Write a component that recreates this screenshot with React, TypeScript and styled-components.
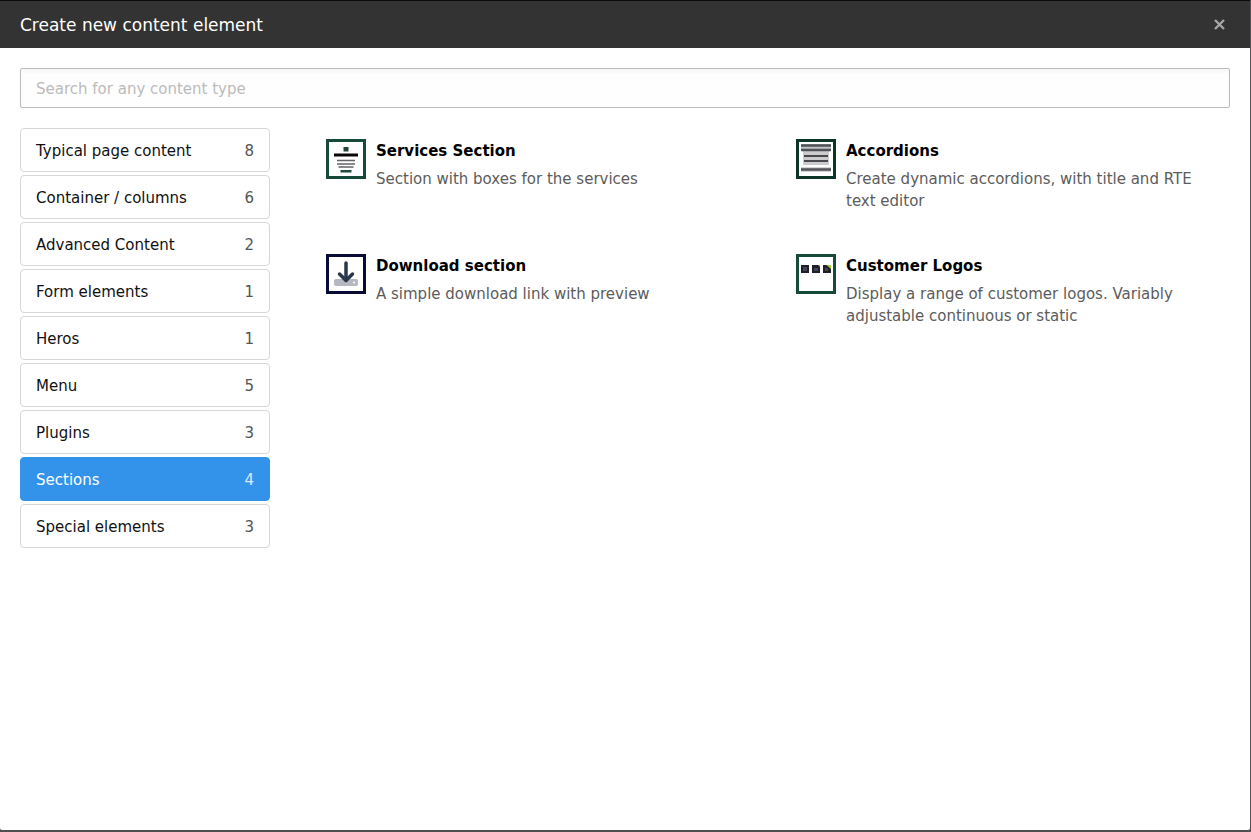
import React from "react";
import styled, { createGlobalStyle } from "styled-components";

const GlobalStyle = createGlobalStyle`
  *, *::before, *::after { box-sizing: border-box; }
  html, body { margin: 0; }
  body {
    background: #505053;
    color: #000;
    font-family: Verdana, "DejaVu Sans", sans-serif;
    font-size: 15px;
    line-height: 22px;
  }
`;

const Modal = styled.div`
  display: flex;
  flex-direction: column;
  min-height: calc(100vh - 2px);
  margin: 0 1px 2px 0;
  background: #fff;
  border-radius: 0 0 2px 2px;
`;

const ModalHeader = styled.header`
  display: flex;
  align-items: center;
  justify-content: space-between;
  height: 48px;
  padding: 0 20px;
  border-top: 1px solid #0c0c0c;
  background: #333;
  color: #fff;
`;

const ModalTitle = styled.h1`
  margin: 0;
  font-size: 17px;
  font-weight: 400;
`;

const CloseButton = styled.button`
  display: flex;
  padding: 5px;
  border: 0;
  background: none;
  color: #a6a6a6;
  cursor: pointer;
`;

const ModalBody = styled.main`
  display: flex;
  flex-direction: column;
  gap: 20px;
  padding: 20px;
`;

const SearchInput = styled.input`
  width: 100%;
  height: 40px;
  padding: 2px 15px 0;
  border: 1px solid #bbb;
  border-radius: 2px;
  background: #fefefe;
  box-shadow: inset 0 3px 3px #f7f7f7;
  font: inherit;
  color: #000;

  &::placeholder {
    color: #bbb;
    opacity: 1;
  }
`;

const Wizard = styled.div`
  display: flex;
  align-items: flex-start;
  gap: 20px;
`;

const CategoryNav = styled.nav`
  display: flex;
  flex: 0 0 250px;
  flex-direction: column;
  gap: 3px;
`;

const CategoryButton = styled.button<{ $active: boolean }>`
  display: flex;
  align-items: center;
  justify-content: space-between;
  height: 44px;
  padding: 2px 15px 0;
  border: 1px solid ${(p) => (p.$active ? "#3393eb" : "#d7d7d7")};
  border-radius: 4px;
  background: ${(p) => (p.$active ? "#3393eb" : "#fff")};
  color: ${(p) => (p.$active ? "#fff" : "#111")};
  font: inherit;
  text-align: left;
  cursor: pointer;
`;

const Count = styled.span<{ $active: boolean }>`
  color: ${(p) => (p.$active ? "#d6e9fb" : "#555")};
`;

const ItemGrid = styled.div`
  display: grid;
  flex: 1;
  grid-template-columns: repeat(2, minmax(0, 1fr));
`;

const Item = styled.button`
  display: flex;
  align-items: flex-start;
  gap: 10px;
  min-height: 115px;
  padding: 11px 16px 20px 36px;
  border: 0;
  background: none;
  color: inherit;
  font: inherit;
  text-align: left;
  cursor: pointer;
`;

const ItemIcon = styled.svg`
  flex: none;
  width: 40px;
  height: 40px;
`;

const ItemText = styled.span`
  display: flex;
  flex-direction: column;
  gap: 5px;
`;

const ItemTitle = styled.strong`
  font-weight: 700;
  line-height: 24px;
`;

const ItemDescription = styled.span`
  color: #5c5c5c;
`;

const ServicesIcon = () => (
  <ItemIcon viewBox="0 0 40 40" aria-hidden="true">
    <rect x="1.5" y="1.5" width="37" height="37" fill="#fff" stroke="#174a38" strokeWidth="3" />
    <rect x="17.5" y="8" width="5" height="4.5" fill="#214539" />
    <rect x="8" y="14.5" width="24" height="3" fill="#080808" />
    <path d="M11 21.500h18M11 25h18M12.500 28h15" stroke="#62656a" strokeWidth="1.700" />
    <rect x="14.500" y="31" width="11" height="2.500" fill="#214b3c" />
  </ItemIcon>
);

const AccordionIcon = () => (
  <ItemIcon viewBox="0 0 40 40" aria-hidden="true">
    <rect x="1.500" y="1.500" width="37" height="37" fill="#fff" stroke="#0d3527" strokeWidth="3" />
    <rect x="5" y="5" width="30" height="7" fill="#c3c3c5" />
    <rect x="7" y="12" width="26" height="14" fill="#cbcbce" />
    <rect x="5" y="28" width="30" height="5" fill="#d3d3d6" />
    <path d="M5 6.500h30M5 11h30M5 30.500h30" stroke="#505257" strokeWidth="2.500" />
    <path d="M8 17h24M8 22h24" stroke="#48494e" strokeWidth="1.800" />
  </ItemIcon>
);

const DownloadIcon = () => (
  <ItemIcon viewBox="0 0 40 40" aria-hidden="true">
    <rect x="1.500" y="1.500" width="37" height="37" fill="#fff" stroke="#080b36" strokeWidth="3" />
    <rect x="8" y="25" width="24" height="7" rx="2" fill="#b5b8c0" />
    <circle cx="28" cy="28.500" r="1" fill="#fff" />
    <path d="M20 9v17" fill="none" stroke="#28364b" strokeWidth="3.500" strokeLinecap="round" />
    <path d="m13.500 20 6.500 6.500 6.500-6.500" fill="none" stroke="#28364b" strokeWidth="3.500" strokeLinecap="round" strokeLinejoin="round" />
  </ItemIcon>
);

const LogosIcon = () => (
  <ItemIcon viewBox="0 0 40 40" aria-hidden="true">
    <rect x="1.500" y="1.500" width="37" height="37" fill="#fff" stroke="#174a38" strokeWidth="3" />
    <rect x="5" y="11" width="8" height="8" fill="#20202c" />
    <rect x="16" y="11" width="8" height="8" fill="#20202c" />
    <rect x="27" y="11" width="8" height="8" fill="#20202c" />
    <path d="M7 13h4v4H7zM18 14h4v3h-4zM29 14h3v3h-3z" fill="#424653" />
    <path d="M22 11h2v2z" fill="#9ab05c" />
    <path d="M30.500 11H35v4z" fill="#a5d32b" />
  </ItemIcon>
);

const categories = [
  { name: "Typical page content", count: 8 },
  { name: "Container / columns", count: 6 },
  { name: "Advanced Content", count: 2 },
  { name: "Form elements", count: 1 },
  { name: "Heros", count: 1 },
  { name: "Menu", count: 5 },
  { name: "Plugins", count: 3 },
  { name: "Sections", count: 4 },
  { name: "Special elements", count: 3 },
];

const items = [
  { title: "Services Section", text: "Section with boxes for the services", Icon: ServicesIcon },
  { title: "Accordions", text: "Create dynamic accordions, with title and RTE text editor", Icon: AccordionIcon },
  { title: "Download section", text: "A simple download link with preview", Icon: DownloadIcon },
  {
    title: "Customer Logos",
    text: "Display a range of customer logos. Variably adjustable continuous or static",
    Icon: LogosIcon,
  },
];

export default function App() {
  const [active, setActive] = React.useState("Sections");

  return (
    <>
      <GlobalStyle />
      <Modal role="dialog" aria-labelledby="modal-title">
        <ModalHeader>
          <ModalTitle id="modal-title">Create new content element</ModalTitle>
          <CloseButton type="button" aria-label="Close">
            <svg width="11" height="11" viewBox="0 0 11 11" aria-hidden="true">
              <path d="m1 1 9 9m0-9-9 9" stroke="currentColor" strokeWidth="2.400" />
            </svg>
          </CloseButton>
        </ModalHeader>
        <ModalBody>
          <SearchInput type="search" aria-label="Search for any content type" placeholder="Search for any content type" />
          <Wizard>
            <CategoryNav aria-label="Content categories">
              {categories.map(({ name, count }) => (
                <CategoryButton
                  key={name}
                  type="button"
                  $active={name === active}
                  aria-pressed={name === active}
                  onClick={() => setActive(name)}
                >
                  <span>{name}</span>
                  <Count $active={name === active}>{count}</Count>
                </CategoryButton>
              ))}
            </CategoryNav>
            <ItemGrid>
              {items.map(({ title, text, Icon }) => (
                <Item key={title} type="button">
                  <Icon />
                  <ItemText>
                    <ItemTitle>{title}</ItemTitle>
                    <ItemDescription>{text}</ItemDescription>
                  </ItemText>
                </Item>
              ))}
            </ItemGrid>
          </Wizard>
        </ModalBody>
      </Modal>
    </>
  );
}
